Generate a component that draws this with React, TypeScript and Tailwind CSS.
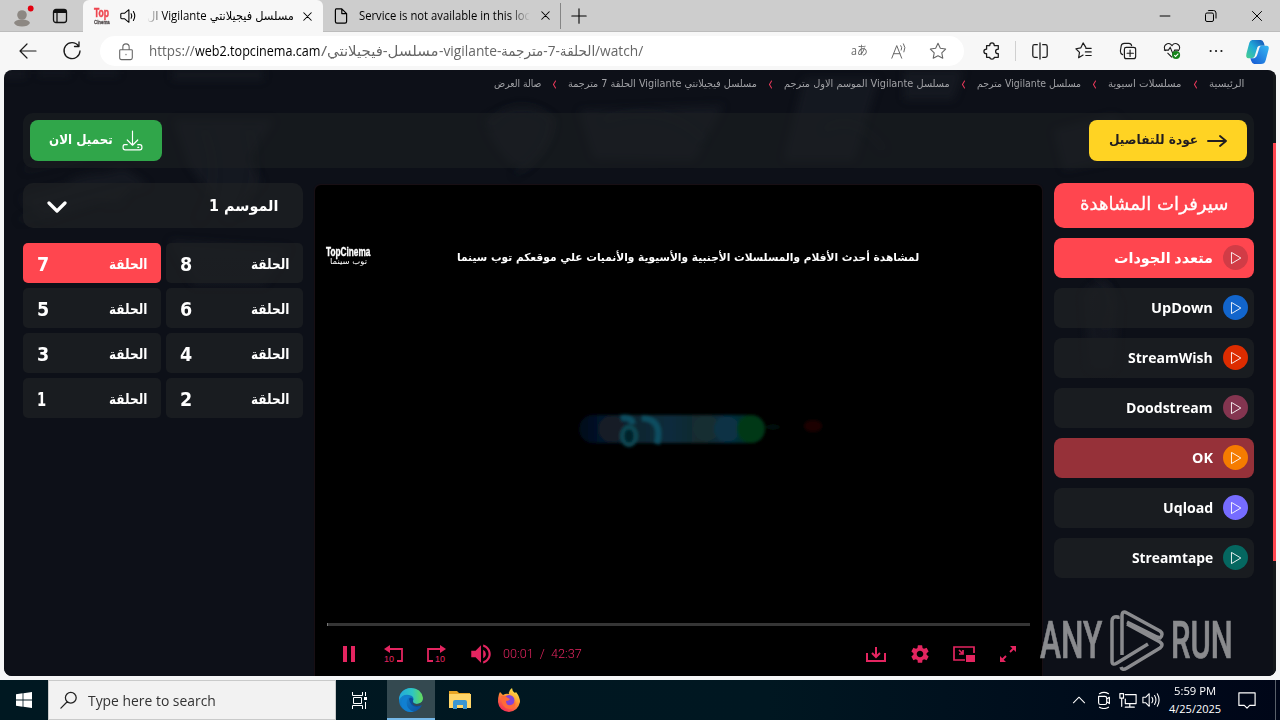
import { useLayoutEffect, useRef } from "react";
import type { ReactNode } from "react";
import { MdSettings, MdVolumeUp } from "react-icons/md";

/** One line of text, stretched horizontally to fill the width of its box. */
function Fit({ className, children, rtl }: { className: string; children: ReactNode; rtl?: boolean }) {
  const box = useRef<HTMLSpanElement>(null);
  const text = useRef<HTMLSpanElement>(null);
  useLayoutEffect(() => {
    if (!box.current || !text.current) return;
    const k = box.current.clientWidth / text.current.offsetWidth;
    text.current.style.transform = `scaleX(${k})`;
  }, []);
  return (
    <span ref={box} dir="ltr" className={`flex shrink-0 whitespace-nowrap ${className}`}>
      <span ref={text} dir={rtl ? "rtl" : "ltr"} className="block shrink-0 origin-left">{children}</span>
    </span>
  );
}

function Icon({ d, className, w = 1 }: { d: string; className: string; w?: number }) {
  return (
    <svg viewBox="0 0 20 20" className={`shrink-0 ${className}`} fill="none" stroke="currentColor" strokeWidth={w} strokeLinecap="round" strokeLinejoin="round">
      <path d={d} />
    </svg>
  );
}

function TitleBar() {
  return (
    <div className="flex h-8 bg-[#cdcdcd] text-black">
      <div className="flex w-[83px] items-center border-b border-[#bcbcbc] pl-3">
        <svg viewBox="0 0 22 26" className="h-[26px] w-[22px]">
          <circle cx="10" cy="12" r="4.800" fill="#8d8883" />
          <path d="M2 20Q3 16.500 10 16.500Q17 16.500 18 20Q16 23.500 10 23.500Q4 23.500 2 20Z" fill="#8d8883" />
          <circle cx="18.700" cy="5.500" r="2.900" fill="#e3000f" />
        </svg>
        <svg viewBox="0 0 16 16" className="ml-[18px] mt-px h-4 w-4" fill="none" stroke="#111" strokeWidth="1.300">
          <rect x="1.500" y="1.500" width="13" height="13" rx="2.500" />
          <path d="M2 3.500H14" strokeWidth="3" />
          <path d="M5 5V14" />
        </svg>
      </div>
      <div className="flex w-[240px] items-center rounded-t-md bg-[#f7f7f7] pl-[11px]">
        <span className="flex w-4 flex-col gap-px font-['Liberation_Sans'] font-bold">
          <Fit className="w-[15px] text-[12px] font-black leading-[11px] text-[#ee4650] [-webkit-text-stroke:0.5px_#ee4650]">Top</Fit>
          <Fit className="w-4 text-[6px] leading-[5px] text-[#554f50] [-webkit-text-stroke:0.3px_#554f50]">Cinema</Fit>
        </span>
        <Icon className="ml-[9px] h-[18px] w-[18px]" w={1.200} d="M2 8V12Q2 13 3 13H6L11 17V3L6 7H3Q2 7 2 8ZM13.500 7.500Q15 10 13.500 12.500M16 5Q19 10 16 15" />
        <span className="relative ml-[10px]">
          <Fit rtl className="w-[147px] font-['Open_Sans','DejaVu_Sans',sans-serif] text-[12px] leading-5">مسلسل فيجيلانتي Vigilante ال</Fit>
          <span className="absolute inset-y-0 left-0 w-[11px] bg-linear-to-r from-[#f7f7f7] to-[#f7f7f7]/40" />
        </span>
        <Icon className="ml-[6px] h-[15px] w-[15px]" w={1.400} d="M5 5L15 15M15 5L5 15" />
      </div>
      <div className="flex w-[238px] items-center border-b border-[#bcbcbc] pl-[10px]">
        <Icon className="h-[18px] w-[16px]" w={1.500} d="M4 1H11L17 7V17Q17 19 15 19H5Q3 19 3 17V3Q3 1 4 1ZM11 1V7H17" />
        <span className="relative ml-[10px]">
          <Fit className="w-[171px] font-['Open_Sans'] text-[12px] leading-5">Service is not available in this loc</Fit>
          <span className="absolute inset-y-0 right-0 w-5 bg-linear-to-l from-[#cdcdcd] to-[#cdcdcd]/0" />
        </span>
        <Icon className="ml-[8px] h-[15px] w-[15px]" w={1.400} d="M5 5L15 15M15 5L5 15" />
        <span className="ml-auto h-[26px] w-px bg-[#858585]" />
      </div>
      <div className="flex flex-1 items-center border-b border-[#bcbcbc] pr-4">
        <Icon className="ml-[9px] h-[18px] w-[18px]" w={1.200} d="M10 2V18M2 10H18" />
        <span className="ml-auto" />
        <Icon className="h-[14px] w-[14px]" w={1.400} d="M3 10H17" />
        <svg viewBox="0 0 14 14" className="ml-8 h-[14px] w-[14px]" fill="none" stroke="black">
          <rect x="1.500" y="4" width="8" height="8.500" rx="1.500" />
          <path d="M4 2Q4 1.500 5 1.500H9.500Q12 1.500 12 4V9.500" />
        </svg>
        <Icon className="ml-8 h-[14px] w-[14px]" w={1.400} d="M3.500 3.500L16.500 16.500M16.500 3.500L3.500 16.500" />
      </div>
    </div>
  );
}

function Toolbar() {
  return (
    <div className="flex h-[38px] items-center bg-[#f7f7f7] text-[#1b1b1b]">
      <Icon className="ml-[18px] h-5 w-5" w={1.200} d="M18 10H2M9 3L2 10L9 17" />
      <Icon className="ml-6 h-5 w-5" w={1.300} d="M16.500 5A8 8 0 1 0 18 10M17 1V5.500H12.500" />
      <div className="ml-[18px] flex h-[30px] w-[864px] items-center rounded-full bg-white pl-[17px] font-['Open_Sans','DejaVu_Sans',sans-serif] text-[14px] leading-5 text-[#666]">
        <Icon className="h-[19px] w-[18px]" w={1.200} d="M4 8H16Q17 8 17 9V17Q17 19 15 19H5Q3 19 3 17V9Q3 8 4 8ZM6.500 8V5Q6.500 1.500 10 1.500Q13.500 1.500 13.500 5V8M10 13V13.500" />
        <Fit className="ml-[14px] w-[46px]">https://</Fit>
        <Fit className="w-[126px] text-black">web2.topcinema.cam</Fit>
        <Fit className="w-[6px]">/</Fit>
        <Fit rtl className="w-[112px]">مسلسل-فيجيلانتي</Fit>
        <Fit className="w-[62px]">-vigilante-</Fit>
        <Fit rtl className="w-[94px]">الحلقة-7-مترجمة</Fit>
        <Fit className="w-[48px]">/watch/</Fit>
        <span className="ml-auto" />
        <Fit className="w-[17px] font-['Open_Sans','Noto_Sans_CJK_JP',sans-serif] text-[12px] leading-5">aあ</Fit>
        <Icon className="ml-[22px] h-[18px] w-[18px]" w={1.100} d="M2 18L7.500 4L13 18M4 13H11M12 4Q14 6 12.500 9M15 2Q18 6 15.500 11" />
        <Icon className="ml-[21px] mr-[17px] h-[18px] w-[18px]" w={1.200} d="M10 1.500L12.600 7L18.500 7.800L14.200 12L15.300 18L10 15.200L4.700 18L5.800 12L1.500 7.800L7.400 7Z" />
      </div>
      <Icon className="ml-[19px] h-[18px] w-[18px]" w={1.400} d="M4 4H7.500Q7.500 1 10 1Q12.500 1 12.500 4H17V8Q14 8 14 10.500Q14 13 17 13V17H12.500Q12.500 19 10 19Q7.500 19 7.500 17H4V13Q1 13 1 10.500Q1 8 4 8Z" />
      <span className="ml-[14px] h-5 w-px bg-[#d0d0d0]" />
      <Icon className="ml-[15px] h-[18px] w-[18px]" w={1.400} d="M7 3H4Q2 3 2 5V15Q2 17 4 17H7M13 3H16Q18 3 18 5V15Q18 17 16 17H13M10 1V19" />
      <Icon className="ml-[26px] h-[18px] w-[18px]" w={1.300} d="M12 6L9 1L6.500 6.500L1 7.500L5 11.500L4 17.500L9 14.500M12 7H18M11.500 11H18M12 15H18" />
      <Icon className="ml-[26px] h-[18px] w-[18px]" w={1.300} d="M4 14Q1.500 13 1.500 10L2.500 4Q3 1.500 6 1.500H11Q13.500 1.500 14 4M8 6H16Q18.500 6 18.500 8V16Q18.500 18.500 16 18.500H8Q6 18.500 6 16V8Q6 6 8 6ZM12.300 9V16M9 12.500H16" />
      <svg viewBox="0 0 20 20" className="ml-[26px] h-[18px] w-[18px]" fill="none" stroke="#1b1b1b" strokeWidth="1.200">
        <path d="M3 10Q0 6 3 3Q7 0 10 4Q13 0 17 3Q20 6 17 10M5 12L10 17M1 9H6L8 6L11 13L13 9H17" />
        <circle cx="14.500" cy="14.500" r="4.500" fill="#16831b" stroke="none" />
        <path d="M12.500 14.500L14 16L17 13" stroke="white" />
      </svg>
      <Icon className="ml-[26px] h-[18px] w-[18px]" w={2.300} d="M4 10H4.100M10 10H10.100M16 10H16.100" />
      <svg viewBox="0 0 26 26" className="ml-[20px] h-[25px] w-[26px]">
        <defs>
          <linearGradient id="cop1" x1="0" y1="1" x2="1" y2="0"><stop stopColor="#48d08d" /><stop offset=".5" stopColor="#20a9d8" /><stop offset="1" stopColor="#164db5" /></linearGradient>
          <linearGradient id="cop2" x1="0" y1="1" x2="1" y2="0"><stop stopColor="#1557d3" /><stop offset="1" stopColor="#36b9f3" /></linearGradient>
        </defs>
        <path d="M7 1H16Q18 1 19 4L20 7H15Q12.500 7 12 10L9.500 18Q9 20 5 20H3Q0 20 1 15L4 4Q5 1 7 1Z" fill="url(#cop1)" />
        <path d="M17 7H22Q25 7 24 11L21 22Q20 26 16 26H9Q7 26 6 23L5 20H9Q11 20 12 17L14.500 9Q15 7 17 7Z" fill="url(#cop2)" />
      </svg>
    </div>
  );
}

const crumbs = [
  { label: "الرئيسية", w: "w-[35px]" },
  { label: "مسلسلات اسيوية", w: "w-[74px]" },
  { label: "مسلسل Vigilante مترجم", w: "w-[104px]" },
  { label: "مسلسل Vigilante الموسم الاول مترجم", w: "w-[166px]" },
  { label: "مسلسل فيجيلانتي Vigilante الحلقة 7 مترجمة", w: "w-[189px]" },
  { label: "صالة العرض", w: "w-[47px]" },
];

function Breadcrumbs() {
  return (
    <div dir="rtl" className="flex h-[28px] items-center pr-[29px] text-[10px] leading-4 text-[#a0a1a5]">
      {crumbs.map((c, i) => (
        <span key={c.label} className="flex items-center">
          {i > 0 && <Icon className="mx-[10px] h-[11px] w-[7px] text-[#e8385a]" w={3} d="M13 0L7 10L13 20" />}
          <Fit rtl className={c.w}>{c.label}</Fit>
        </span>
      ))}
    </div>
  );
}

const servers = [
  { name: "متعدد الجودات", w: "w-[99px]", row: "bg-[#ff464f]", dot: "bg-[#d13c46]" },
  { name: "UpDown", w: "w-[62px]", row: "bg-[#1d2023]/75", dot: "bg-[#1265cc]" },
  { name: "StreamWish", w: "w-[85px]", row: "bg-[#1d2023]/75", dot: "bg-[#dd2c00]" },
  { name: "Doodstream", w: "w-[87px]", row: "bg-[#1d2023]/75", dot: "bg-[#843550]" },
  { name: "OK", w: "w-[21px]", row: "bg-[#963139]", dot: "bg-[#f57c00]" },
  { name: "Uqload", w: "w-[50px]", row: "bg-[#1d2023]/75", dot: "bg-[#766cff]" },
  { name: "Streamtape", w: "w-[81px]", row: "bg-[#1d2023]/75", dot: "bg-[#056760]" },
];

function Servers() {
  return (
    <div className="flex w-[200px] flex-col gap-[10px] text-white">
      <div className="flex h-[45px] items-center justify-center rounded-[10px] bg-[#ff464f] pb-[3px]">
        <Fit rtl className="w-[148px] text-[18px] leading-6 [-webkit-text-stroke:0.3px_white]">سيرفرات المشاهدة</Fit>
      </div>
      {servers.map((s) => (
        <div key={s.name} className={`flex h-10 items-center justify-end gap-[10px] rounded-lg pb-px pr-[6px] ${s.row}`}>
          <Fit className={`${s.w} pb-px font-['Open_Sans','DejaVu_Sans',sans-serif] text-[15px] font-bold leading-5`}>{s.name}</Fit>
          <span className={`flex h-[25px] w-[25px] items-center justify-center rounded-full ${s.dot}`}>
            <Icon className="h-[12px] w-[12px]" w={1.500} d="M3 1L18 10L3 19Z" />
          </span>
        </div>
      ))}
    </div>
  );
}

function Episodes() {
  return (
    <div className="w-[280px] text-white">
      <div className="flex h-[45px] items-center justify-between rounded-[10px] bg-[#1d2023]/75 pl-6 pr-[25px]">
        <Icon className="mt-[3px] h-5 w-5" w={3.200} d="M2 6L10 14L18 6" />
        <Fit rtl className="w-[69px] text-[15px] font-bold leading-5">الموسم 1</Fit>
      </div>
      <div className="mt-[15px] grid grid-cols-[138px_137px] gap-[5px]">
        {[7, 8, 5, 6, 3, 4, 1, 2].map((n) => (
          <div key={n} className={`flex h-10 items-center justify-between rounded-[5px] pl-[14px] pr-[14px] pt-px ${n === 7 ? "bg-[#ff464f]" : "bg-[#1d2023]/75"}`}>
            <Fit className={n === 1 ? "w-[9px] text-[19px] font-bold leading-6" : "w-[12px] text-[19px] font-bold leading-6"}>{n}</Fit>
            <Fit rtl className="w-[38px] text-[14px] font-bold leading-5">الحلقة</Fit>
          </div>
        ))}
      </div>
    </div>
  );
}

function VideoFrame() {
  return (
    <svg viewBox="0 0 727 351" className="h-[351px] w-[727px]">
      <defs>
        <filter id="soft" x="-20%" y="-50%" width="140%" height="200%"><feGaussianBlur stdDeviation="1.800" /></filter>
        <linearGradient id="bar">
          <stop stopColor="#020818" /><stop offset=".12" stopColor="#04142a" /><stop offset=".3" stopColor="#092630" />
          <stop offset=".5" stopColor="#082c3c" /><stop offset=".66" stopColor="#16292c" /><stop offset=".8" stopColor="#052c40" /><stop offset="1" stopColor="#033018" />
        </linearGradient>
      </defs>
      <g filter="url(#soft)">
        <rect x="264" y="144" width="185" height="28" rx="14" fill="url(#bar)" />
        <circle cx="297" cy="158" r="13" fill="#151f28" />
        <ellipse cx="314" cy="165" rx="7" ry="9" fill="#06222a" stroke="#0e4854" strokeWidth="4" />
        <path d="M306 147Q316 145 318 153M327 147Q348 148 342 173" fill="none" stroke="#0f4e60" strokeWidth="6" />
        <circle cx="391" cy="157" r="13" fill="#192e33" />
        <circle cx="412" cy="158" r="13" fill="#073344" />
        <circle cx="436" cy="158" r="14" fill="#033815" />
        <ellipse cx="458" cy="156" rx="7" ry="3" fill="#020e08" />
        <ellipse cx="498" cy="155" rx="9" ry="6" fill="#1d0404" />
      </g>
    </svg>
  );
}

function Player() {
  return (
    <div className="flex h-[491px] w-[727px] flex-col rounded-t-md bg-black text-[#e42560] shadow-[0_0_1px_1px_#1a1015]">
      <div className="mt-[60px] flex h-[26px] items-center pl-[11px] text-white">
        <span className="flex w-[44px] flex-col items-center pb-1">
          <Fit className="w-[44px] font-['Liberation_Sans'] text-[12px] font-bold leading-[10px] [-webkit-text-stroke:0.4px_white]">TopCinema</Fit>
          <Fit rtl className="w-[37px] text-[8px] leading-[9px]">توب سينما</Fit>
        </span>
        <Fit rtl className="ml-[87px] w-[462px] text-[11px] font-bold leading-4">لمشاهدة أحدث الأفلام والمسلسلات الأجنبية والأسيوية والأنميات علي موقعكم توب سينما</Fit>
      </div>
      <VideoFrame />
      <div className="ml-3 mt-px h-[3px] w-[703px] shrink-0 border-l border-[#777] bg-[#353535]" />
      <div className="flex h-[50px] items-center pl-[27px] pr-[25px] pt-[5px]">
        <svg viewBox="0 0 14 16" className="h-4 w-[14px]" fill="currentColor"><path d="M1 0H5V16H1ZM9 0H13V16H9Z" /></svg>
        <svg viewBox="0 0 20 20" className="ml-7 h-5 w-5" fill="none" stroke="currentColor" strokeWidth="1.800">
          <path d="M2 5H18V17H13" /><path d="M6 1V9L0 5Z" fill="currentColor" stroke="none" />
          <text x="0" y="18" fontSize="9" fill="currentColor" stroke="none" fontFamily="Liberation Sans">10</text>
        </svg>
        <svg viewBox="0 0 20 20" className="ml-[22px] h-5 w-5" fill="none" stroke="currentColor" strokeWidth="1.800">
          <path d="M18 5H2V17H7" /><path d="M14 1V9L20 5Z" fill="currentColor" stroke="none" />
          <text x="9" y="18" fontSize="9" fill="currentColor" stroke="none" fontFamily="Liberation Sans">10</text>
        </svg>
        <MdVolumeUp className="ml-[22px] h-[26px] w-[26px]" />
        <Fit className="ml-[9px] w-[79px] whitespace-pre font-['Roboto'] text-[12px] font-light leading-4">00:01  /  42:37</Fit>
        <svg viewBox="0 0 20 20" className="ml-auto h-5 w-5" fill="none" stroke="currentColor" strokeWidth="2">
          <path d="M1 9V17H19V9M10 3V13M6 9L10 13L14 9" />
        </svg>
        <MdSettings className="ml-[23px] h-[22px] w-[22px]" />
        <svg viewBox="0 0 22 20" className="ml-[22px] h-5 w-[22px]" fill="none" stroke="currentColor" strokeWidth="1.700">
          <path d="M21 9V3H1V16H12M6 6L9 9M10 6V10H6" />
          <rect x="13" y="11" width="9" height="7" fill="currentColor" stroke="none" />
        </svg>
        <svg viewBox="0 0 18 18" className="ml-6 h-[18px] w-[18px]" fill="none" stroke="currentColor" strokeWidth="1.800">
          <path d="M11 7L15 3M3 15L7 11" />
          <path d="M11 1H17V7ZM1 11V17H7Z" fill="currentColor" stroke="none" />
        </svg>
      </div>
    </div>
  );
}

function Backdrop() {
  return (
    <svg viewBox="0 0 1272 606" className="absolute inset-0 h-[606px] w-[1272px]">
      <defs>
        <filter id="haze"><feGaussianBlur stdDeviation="4" /></filter>
        <linearGradient id="fade" x1="0" y1="0" x2="0" y2="1"><stop offset=".3" stopColor="#0d1018" stopOpacity="0" /><stop offset=".8" stopColor="#0d1018" /></linearGradient>
      </defs>
      <g filter="url(#haze)" fill="#23262f" opacity=".4">
        <path d="M0 0H22V8H0ZM34 0H66V6H34ZM84 0H115V6H84ZM168 0H260V10H168ZM15 128L120 98L145 115L40 150ZM170 50H270L245 88L258 112L225 150L185 95Z" />
        <path d="M65 110Q110 95 130 115L115 135L75 130ZM480 50Q520 25 550 48Q555 70 520 100Q495 90 480 50ZM575 40L720 35L690 90L590 88ZM800 8H875L850 90H780Z" />
        <path d="M900 0H960L950 30H900ZM1050 60L1110 45L1150 82L1060 100ZM1080 225Q1100 195 1115 235L1110 300H1085ZM165 170L285 178L260 215L190 215Z" />
      </g>
      <g fill="none" stroke="#262932" opacity=".55" strokeWidth="2" filter="url(#haze)">
        <path d="M485 55Q515 20 548 50Q545 85 510 105M200 60Q220 110 195 150M245 60Q260 110 235 145M20 100L110 80M15 150L125 120M600 50Q660 30 700 70M820 60Q850 40 880 80M1090 205Q1120 220 1100 260" />
      </g>
      <rect width="1272" height="606" fill="url(#fade)" />
    </svg>
  );
}

function Watermark() {
  return (
    <div className="absolute left-[1036px] top-[540px] flex h-[62px] items-center font-['Roboto'] text-[51px] leading-[62px] text-[#8a8b8e]">
      <Fit className="w-[62px] font-medium [-webkit-text-stroke:0.7px_#8a8b8e]">ANY</Fit>
      <svg viewBox="0 0 56 62" className="ml-[7px] h-[62px] w-[56px]" fill="none" stroke="#8a8b8e" strokeWidth="3.500" strokeLinejoin="round">
        <path d="M9 9V7Q3 6 3 11V51Q3 56 8 53L39 34" />
        <path d="M13 45V6Q13 0 18 3L51 21Q55 24 51 28L48 27L18 12" />
        <path d="M12 57Q13 61 18 58L51 38Q55 35 51 32L18 14" />
      </svg>
      <Fit className="ml-[6px] w-[62px] font-medium [-webkit-text-stroke:0.7px_#8a8b8e]">RUN</Fit>
    </div>
  );
}

function Page() {
  return (
    <div className="relative mx-1 h-[606px] overflow-hidden rounded-lg bg-[#0d1018]">
      <Backdrop />
      <div className="relative flex h-full">
        <div className="w-[1269px]">
          <Breadcrumbs />
          <div className="ml-[19px] mt-[15px] flex h-[55px] w-[1231px] items-center justify-between rounded-[10px] bg-[#1d2023]/55 px-[7px]">
            <div className="flex h-[41px] w-[132px] items-center rounded-lg bg-[#30a64a] pl-[19px] text-white">
              <Fit rtl className="mb-0.5 w-[64px] text-[13px] font-bold leading-5">تحميل الان</Fit>
              <Icon className="ml-[9px] h-[21px] w-[21px]" w={1.100} d="M10 1V14M5 9.500L10 14.500L15 9.500M5 14H2.500Q1 14 1 16.500Q1 19 3 19H17Q19 19 19 16.500Q19 14 17 14H15M15 16.500H16" />
            </div>
            <div className="flex h-[41px] w-[158px] items-center rounded-lg bg-[#ffd323] pl-5 text-[#211d20]">
              <Fit rtl className="mb-0.5 w-[89px] text-[13px] font-bold leading-5">عودة للتفاصيل</Fit>
              <Icon className="ml-[9px] h-5 w-5" w={1.900} d="M1 10H19M13 5L19 10L13 15" />
            </div>
          </div>
          <div className="ml-[19px] mt-[15px] flex items-start gap-3">
            <Episodes />
            <div className="pt-0.5"><Player /></div>
            <Servers />
          </div>
        </div>
        <div className="w-[3px] bg-[#14171b] pt-[73px]"><div className="h-[418px] bg-[#ff464f]" /></div>
      </div>
      <Watermark />
    </div>
  );
}

function Taskbar() {
  return (
    <div className="mt-1 flex h-10 items-center bg-linear-to-r from-[#001821] via-[#001721] via-60% to-[#000618] text-white">
      <div className="flex w-12 justify-center">
        <svg viewBox="0 0 16 16" className="h-4 w-4" fill="white"><path d="M0 2.300L6.600 1.300V7.600H0ZM7.400 1.200L16 0V7.600H7.400ZM0 8.400H6.600V14.700L0 13.700ZM7.400 8.400H16V16L7.400 14.800Z" /></svg>
      </div>
      <div className="flex h-10 w-[288px] items-center border border-[#c9caca] bg-[#f2f2f2] pl-[11px] text-[#222]">
        <Icon className="h-[18px] w-[18px]" w={1.400} d="M1 19L8 12M18 7.500A6 6 0 1 1 6 7.500A6 6 0 1 1 18 7.500Z" />
        <Fit className="ml-[10px] mt-px w-[128px] font-['Open_Sans'] text-[14px] leading-5 text-[#333]">Type here to search</Fit>
      </div>
      <div className="flex w-[51px] justify-center">
        <svg viewBox="0 0 17 17" className="-ml-1 h-[17px] w-[17px]" fill="none" stroke="white">
          <path d="M1.500 0V3.500H11.500V0M1.500 17V13.500H11.500V17M2.500 5.500H10.500V11.500H2.500ZM14.500 0V4M14.500 10V17" /><rect x="13.500" y="5.500" width="2" height="2" fill="white" />
        </svg>
      </div>
      <div className="flex h-10 w-12 items-center justify-center border-b-2 border-[#75b8e8] bg-[#344950]">
        <svg viewBox="0 0 24 24" className="mt-0.5 h-6 w-6">
          <defs>
            <linearGradient id="edge1"><stop stopColor="#22a9dc" /><stop offset=".55" stopColor="#2ec5c3" /><stop offset="1" stopColor="#67db55" /></linearGradient>
            <linearGradient id="edge2" x1="0" y1="0" x2="1" y2="1"><stop stopColor="#1595dd" /><stop offset="1" stopColor="#0b4c9c" /></linearGradient>
          </defs>
          <circle cx="12" cy="12" r="12" fill="url(#edge2)" />
          <path d="M0 12C0 5 5 0 12 0Q22 0 24 10Q24 16 17 16Q12 16 14 13Q16 8 10 7Q3 6 0 12Z" fill="url(#edge1)" />
          <path d="M10 11Q11 9 13 10Q15 11 14 13Q14 16 18 16Q21 16 23 14Q22 18 18 19Q11 18 10 11Z" fill="#0b4c9c" />
          <path d="M14 13Q13 16 18 16Q22 16 24 12V17Q21 18 17 18Q12 16 14 13Z" fill="#344950" />
          <path d="M8 12Q6 21 15 24Q7 25 3 19Q0 12 8 8Q11 8 11 9Q9 9 8 12Z" fill="#1180d1" />
        </svg>
      </div>
      <div className="flex w-[49px] justify-center">
        <svg viewBox="0 0 22 20" className="h-5 w-[22px]"><path d="M0 1H8L10 3H21V18H0Z" fill="#e8a524" /><path d="M0 4H22V18H0Z" fill="#ffd568" /><path d="M4 19V12Q4 10 6 10H16Q18 10 18 12V19H14V15H8V19Z" fill="#3995d1" /></svg>
      </div>
      <div className="flex w-[49px] justify-center">
        <svg viewBox="0 0 24 24" className="h-6 w-6">
          <defs><linearGradient id="fox" x1=".8" y1="0" x2=".2" y2="1"><stop stopColor="#fff04b" /><stop offset=".45" stopColor="#ff9330" /><stop offset="1" stopColor="#f3215c" /></linearGradient></defs>
          <path d="M2 6L3 4L6 7Q9 5 12 6Q11 3 15 0Q15 3 18 5L19 4Q23 9 23 14Q21 23 12 24Q2 23 1 14Q1 9 2 6Z" fill="url(#fox)" />
          <circle cx="12" cy="12.500" r="5.500" fill="#8244d7" />
          <path d="M4 8Q8 7 11 10L13 11Q12 13 9 13Q9 18 14 17Q18 16 18 12Q20 21 12 21Q4 20 4 8Z" fill="#ff6a38" />
        </svg>
      </div>
      <span className="ml-auto" />
      <Icon className="ml-0.5 h-[14px] w-[14px]" w={1.500} d="M2 14L10 6L18 14" />
      <Icon className="ml-[9px] h-[18px] w-[18px]" w={1.300} d="M4 6H11Q13 6 13 8V13Q13 15 11 15H6Q4 15 4 13ZM13 9L16 7V14L13 12M5 3Q10 0 15 3M5 18Q10 21 15 18" />
      <Icon className="ml-[6px] h-[18px] w-[18px]" w={1.300} d="M7 4H19V14H7V9M1 3H5V8H1ZM3 8V17M12 14V18M7 18H17" />
      <Icon className="ml-[5px] h-[18px] w-[18px]" w={1.200} d="M1 7H4L8 3V17L4 13H1ZM11 7Q13 10 11 13M14 5Q17 10 14 15M17 3Q21 10 17 17" />
      <div className="ml-[7px] flex w-[56px] flex-col items-center font-['Open_Sans'] text-[11px] leading-[18px]">
        <Fit className="w-[42px]">5:59 PM</Fit>
        <Fit className="w-[52px]">4/25/2025</Fit>
      </div>
      <Icon className="ml-[15px] mr-[19px] h-[18px] w-[18px]" w={1.300} d="M1 2H19V16H13L10 19L7 16H1Z" />
      <span className="mr-1 h-10 w-px bg-[#59606a]" />
    </div>
  );
}

export default function App() {
  return (
    <div className="h-[720px] w-[1280px] overflow-hidden bg-[#f5f6f7] font-['DejaVu_Sans',sans-serif]">
      <TitleBar />
      <Toolbar />
      <Page />
      <Taskbar />
    </div>
  );
}
